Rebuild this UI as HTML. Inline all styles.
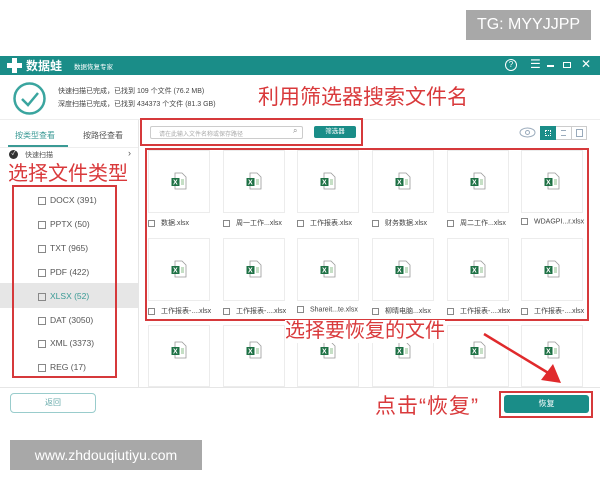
<!DOCTYPE html>
<html><head><meta charset="utf-8"><style>
*{margin:0;padding:0;box-sizing:border-box}
body{width:600px;height:480px;background:#fff;position:relative;overflow:hidden;font-family:"Liberation Sans","Noto Sans CJK SC",sans-serif}
.a{position:absolute}
.red{color:#d9393b;font-family:"Liberation Sans","Noto Sans CJK SC",sans-serif}
.rb{position:absolute;border:2px solid #d6393b}
.card{position:absolute;width:62px;height:63px;border:1px solid #ececec;background:#fff}
.lbl{position:absolute;font-size:7px;color:#444;white-space:nowrap}
.cb{display:inline-block;width:7px;height:7px;border:1px solid #888;vertical-align:middle;margin-right:6px}
.xl{position:absolute;width:16px;height:18px}
.li{position:absolute;left:38px;font-size:8.5px;color:#555}
.li .cb{margin-right:4px;width:8px;height:8px}
</style></head><body>
<div class="a" style="left:466px;top:10px;width:125px;height:30px;background:#a8a8a8;color:#fff;font-size:16px;line-height:30px;text-align:center">TG: MYYJJPP</div>

<div class="a" style="left:0;top:56px;width:600px;height:19px;background:#1a8d88"></div>
<div class="a" style="left:7px;top:58px;width:15px;height:15px">
<div class="a" style="left:5px;top:0;width:5px;height:15px;background:#fff"></div>
<div class="a" style="left:0;top:5px;width:15px;height:5px;background:#fff"></div></div>
<div class="a" style="left:26px;top:57px;color:#fff;font-size:12px;font-weight:bold">数据蛙</div>
<div class="a" style="left:74px;top:61px;color:#fff;font-size:6.5px">数据恢复专家</div>
<div class="a" style="left:505px;top:59px;width:12px;height:12px;border:1.5px solid #fff;border-radius:50%;color:#fff;font-size:8px;text-align:center;line-height:9px">?</div>
<div class="a" style="left:530px;top:57px;color:#fff;font-size:12px">☰</div>
<div class="a" style="left:547px;top:65px;width:7px;height:1.5px;background:#fff"></div>
<div class="a" style="left:563px;top:62px;width:8px;height:6px;border:1.5px solid #fff"></div>
<div class="a" style="left:581px;top:57px;color:#fff;font-size:12px">✕</div>

<svg class="a" style="left:12px;top:81px" width="35" height="35"><circle cx="17.5" cy="17.5" r="15" fill="none" stroke="#3aa59f" stroke-width="2.5"/><path d="M10 18 L16 24 L26 12" fill="none" stroke="#3aa59f" stroke-width="2.5"/></svg>
<div class="a" style="left:58px;top:86px;font-size:7px;color:#444">快速扫描已完成，已找到 109 个文件 (76.2 MB)</div>
<div class="a" style="left:58px;top:99px;font-size:7px;color:#444">深度扫描已完成，已找到 434373 个文件 (81.3 GB)</div>
<div class="a red" style="left:258px;top:81px;font-size:21px">利用筛选器搜索文件名</div>
<div class="a" style="left:0;top:119px;width:600px;height:1px;background:#eee"></div>

<div class="a" style="left:15px;top:130px;font-size:8px;color:#3a9a95">按类型查看</div>
<div class="a" style="left:83px;top:130px;font-size:8px;color:#555">按路径查看</div>
<div class="a" style="left:8px;top:145px;width:60px;height:1.5px;background:#3a9a95"></div>
<div class="a" style="left:138px;top:120px;width:1px;height:268px;background:#e6e6e6"></div>
<div class="a" style="left:0;top:147px;width:138px;height:1px;background:#eee"></div>

<div class="rb" style="left:140px;top:118px;width:223px;height:28px"></div>
<div class="a" style="left:150px;top:126px;width:153px;height:13px;border:1px solid #ccc;border-radius:2px;font-size:6px;color:#aaa;padding:2px 8px">请在此输入文件名称或保存路径</div>
<div class="a" style="left:293px;top:126px;font-size:8px;color:#888">⌕</div>
<div class="a" style="left:314px;top:126px;width:42px;height:12px;background:#1a8d88;border-radius:2px;color:#fff;font-size:6.5px;text-align:center;line-height:12px">筛选器</div>
<svg class="a" style="left:519px;top:127px" width="17" height="11"><ellipse cx="8.5" cy="5.5" rx="7.5" ry="4.5" fill="none" stroke="#9ab" stroke-width="1"/><circle cx="8.5" cy="5.5" r="2" fill="none" stroke="#9ab"/></svg>
<div class="a" style="left:540px;top:126px;width:47px;height:14px;border:1px solid #ccc"></div>
<div class="a" style="left:540px;top:126px;width:16px;height:14px;background:#1a8d88"></div>
<div class="a" style="left:545px;top:130px;width:6px;height:6px;border:1.5px dotted #fff"></div>
<div class="a" style="left:571px;top:126px;width:1px;height:14px;background:#ccc"></div>
<div class="a" style="left:561px;top:130px;width:5px;height:6px;border-top:1px solid #9ab;border-bottom:1px solid #9ab"></div>
<div class="a" style="left:576px;top:129px;width:7px;height:8px;border:1px solid #9ab"></div>

<div class="a" style="left:9px;top:150px;width:9px;height:9px;border-radius:50%;background:#333;color:#fff;font-size:6px;text-align:center;line-height:9px">✓</div>
<div class="a" style="left:25px;top:150px;font-size:7px;color:#555">快速扫描</div>
<div class="a" style="left:128px;top:148px;font-size:9px;color:#555">›</div>
<div class="a red" style="left:8px;top:157px;font-size:20px">选择文件类型</div>
<div class="a" style="left:0;top:283px;width:138px;height:25px;background:#e6e6e6"></div>
<div class="rb" style="left:12px;top:185px;width:105px;height:193px"></div>
<div class="li" style="top:195px"><span class="cb"></span>DOCX (391)</div>
<div class="li" style="top:219px"><span class="cb"></span>PPTX (50)</div>
<div class="li" style="top:243px"><span class="cb"></span>TXT (965)</div>
<div class="li" style="top:267px"><span class="cb"></span>PDF (422)</div>
<div class="li" style="top:291px;color:#3a9a95"><span class="cb"></span>XLSX (52)</div>
<div class="li" style="top:315px"><span class="cb"></span>DAT (3050)</div>
<div class="li" style="top:338px"><span class="cb"></span>XML (3373)</div>
<div class="li" style="top:362px"><span class="cb"></span>REG (17)</div>

<div class="rb" style="left:145px;top:148px;width:444px;height:173px"></div>
<div id="g"></div>
<div class="a red" style="left:285px;top:320px;font-size:20px;background:#fff;line-height:23px">选择要恢复的文件</div>
<svg class="a" style="left:0;top:0" width="600" height="480"><line x1="484" y1="334" x2="550" y2="374" stroke="#e02a2c" stroke-width="2.5"/><polygon points="561,383 541,380 553,364" fill="#e02a2c"/></svg>

<div class="a" style="left:0;top:387px;width:600px;height:1px;background:#e6e6e6"></div>
<div class="a" style="left:10px;top:393px;width:86px;height:20px;border:1px solid #9cc;border-radius:4px;font-size:8px;color:#6aa;text-align:center;line-height:18px">返回</div>
<div class="a red" style="left:375px;top:390px;font-size:21px;letter-spacing:1px">点击“恢复”</div>
<div class="rb" style="left:499px;top:391px;width:94px;height:27px"></div>
<div class="a" style="left:504px;top:395px;width:85px;height:18px;background:#1a8d88;border-radius:3px;color:#fff;font-size:8px;text-align:center;line-height:18px">恢复</div>

<div class="a" style="left:10px;top:440px;width:192px;height:30px;background:#a8a8a8;color:#fff;font-size:14px;line-height:30px;text-align:center">www.zhdouqiutiyu.com</div>

<script>
var xs=[148,223,297,372,447,521];
var l1=["数据.xlsx","周一工作...xlsx","工作报表.xlsx","财务数据.xlsx","周二工作...xlsx","WDAGPI...r.xlsx"];
var l2=["工作报表-....xlsx","工作报表-....xlsx","Shareit...te.xlsx","柳晴电脑...xlsx","工作报表-....xlsx","工作报表-....xlsx"];
var h="";
function xl(x,y){return '<svg class="xl" style="left:'+x+'px;top:'+y+'px" width="16" height="18"><path d="M4 1 H11 L15 5 V17 H4 Z" fill="#fff" stroke="#999" stroke-width="0.8"/><rect x="0.5" y="6" width="8" height="8" fill="#1e7145"/><text x="2" y="12.5" font-size="7" fill="#fff" font-family="Liberation Sans" font-weight="bold">X</text><path d="M10 8h3M10 10h3M10 12h3" stroke="#6a6" stroke-width="0.8"/></svg>';}
[[150,l1],[238,l2],[325,null]].forEach(function(r){
xs.forEach(function(x,i){
var hh=r[1]?63:62;
h+='<div class="card" style="left:'+x+'px;top:'+r[0]+'px;height:'+hh+'px"></div>';
h+=xl(x+23,r[0]+ (r[1]?22:16));
if(r[1])h+='<div class="lbl" style="left:'+x+'px;top:'+(r[0]+68)+'px"><span class="cb"></span>'+r[1][i]+'</div>';
});});
document.getElementById('g').innerHTML=h;
</script>
</body></html>
